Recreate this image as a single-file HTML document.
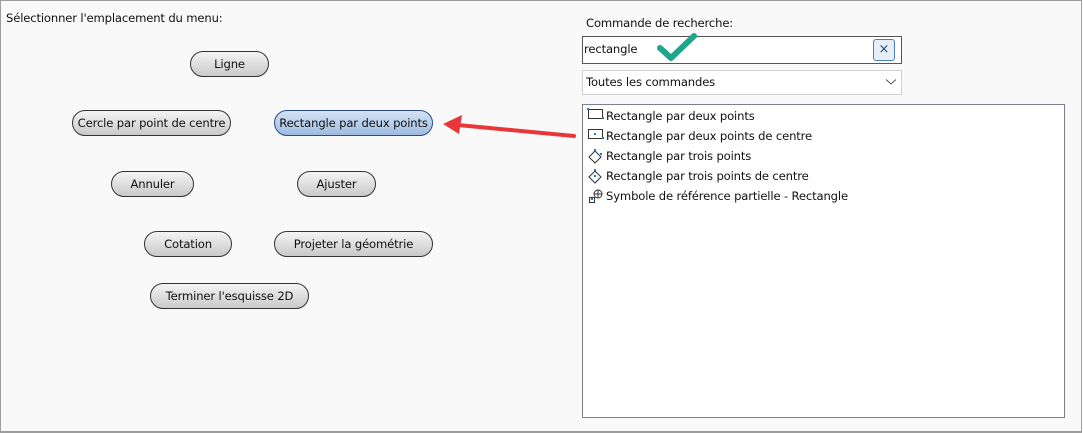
<!DOCTYPE html>
<html><head><meta charset="utf-8"><style>
*{margin:0;padding:0;box-sizing:border-box}
body{width:1083px;height:433px;background:#fff;font-family:"DejaVu Sans","Liberation Sans",sans-serif;font-size:12px;color:#111;position:relative;overflow:hidden}
#frame{position:absolute;left:0;top:0;width:1082px;height:433px;border:1px solid #9d9d9d;border-bottom-width:2px;background:#f9f9f9}
.t{position:absolute;white-space:nowrap;font-size:11.6px;letter-spacing:-0.15px}
.b{position:absolute;height:26px;border:1px solid #333;border-radius:13px;background:linear-gradient(#f4f4f4,#c9c9c9);text-align:center;line-height:24px;font-size:11.6px;letter-spacing:-0.15px;white-space:nowrap}
.sel{background:linear-gradient(#d4e3f5,#9dbbe0);border-color:#2a4a8a}
.box{position:absolute;background:#fff}
.row{position:absolute;left:606px;font-size:11.6px;letter-spacing:-0.15px;white-space:nowrap}
</style></head><body>
<div id="frame"></div>
<div class="t" style="left:6px;top:11px">Sélectionner l'emplacement du menu:</div>
<div class="b" style="left:190px;top:51px;width:79px">Ligne</div>
<div class="b" style="left:72px;top:110px;width:159px">Cercle par point de centre</div>
<div class="b sel" style="left:274px;top:110px;width:159px">Rectangle par deux points</div>
<div class="b" style="left:111px;top:171px;width:83px">Annuler</div>
<div class="b" style="left:297px;top:171px;width:79px">Ajuster</div>
<div class="b" style="left:144px;top:231px;width:88px">Cotation</div>
<div class="b" style="left:274px;top:231px;width:159px">Projeter la géométrie</div>
<div class="b" style="left:150px;top:283px;width:159px">Terminer l'esquisse 2D</div>

<div class="t" style="left:586px;top:16px">Commande de recherche:</div>
<div class="box" style="left:582px;top:36px;width:320px;height:28px;border:1px solid #555"></div>
<div class="t" style="left:584px;top:42px">rectangle</div>
<div style="position:absolute;left:873px;top:39px;width:22px;height:22px;border:1px solid #4a7fc0;border-radius:3px;background:#e6eef8;text-align:center;line-height:19px;font-size:13px;color:#2b4d80">×</div>
<div class="box" style="left:582px;top:70px;width:320px;height:25px;border:1px solid #d0d0d0"></div>
<div class="t" style="left:586px;top:75px">Toutes les commandes</div>
<svg style="position:absolute;left:885px;top:78px" width="12" height="8"><path d="M1 1.5L6 6L11 1.5" fill="none" stroke="#555" stroke-width="1"/></svg>
<div class="box" style="left:582px;top:104px;width:483px;height:314px;border:1px solid #7a7f8a"></div>
<svg style="position:absolute;left:586px;top:106px" width="20" height="100">
<g fill="none" stroke="#333" stroke-width="1">
<rect x="2.5" y="3.5" width="14" height="9"/>
<rect x="2.5" y="23.5" width="14" height="9"/>
<path d="M3 51L9 45L15 51L9 57Z"/>
<path d="M3 71L9 65L15 71L9 77Z"/>
<circle cx="12" cy="88" r="4"/><path d="M8 88H16M12 84V92"/>
<rect x="3.5" y="91.5" width="5" height="5"/>
</g>
<g fill="#1e78d8"><rect x="1" y="2" width="2" height="2"/><rect x="16" y="11" width="2" height="2"/><rect x="8" y="27" width="2" height="2"/><rect x="16" y="31" width="2" height="2"/><rect x="8" y="43" width="2" height="2"/><rect x="14" y="47" width="2" height="2"/><rect x="8" y="63" width="2" height="2"/><rect x="8" y="69" width="2" height="2"/><rect x="5" y="92" width="2" height="2"/></g>
</svg>
<div class="row" style="top:109px">Rectangle par deux points</div>
<div class="row" style="top:129px">Rectangle par deux points de centre</div>
<div class="row" style="top:149px">Rectangle par trois points</div>
<div class="row" style="top:169px">Rectangle par trois points de centre</div>
<div class="row" style="top:189px">Symbole de référence partielle - Rectangle</div>

<svg style="position:absolute;left:0;top:0" width="1083" height="433">
<path d="M574 136L458 125" stroke="#e8373a" stroke-width="4" stroke-linecap="round"/>
<path d="M443 124L462 115L459 134Z" fill="#e8373a"/>
<path d="M660 48L671 58L694 36" fill="none" stroke="#1fa58a" stroke-width="6" stroke-linecap="round" stroke-linejoin="round"/>
</svg>
</body></html>
